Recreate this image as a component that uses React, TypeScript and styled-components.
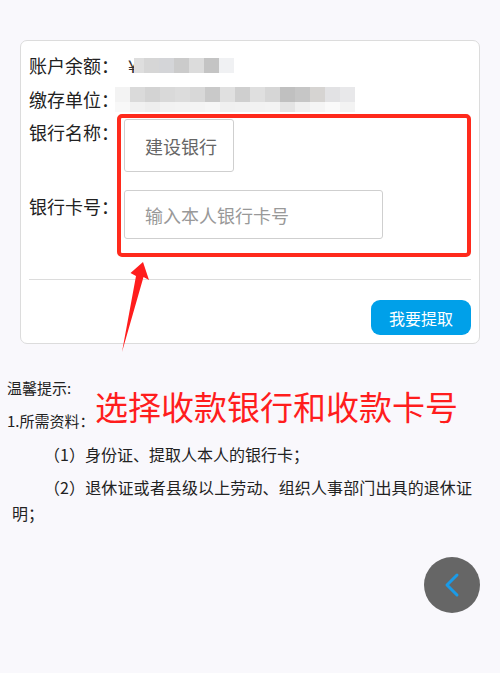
import React from 'react';
import styled, { createGlobalStyle } from 'styled-components';

const GlobalStyle = createGlobalStyle`
  html, body {
    margin: 0;
    padding: 0;
    background: #f9f8fc;
  }
  body {
    font-family: "Noto Sans CJK SC", "Noto Sans", sans-serif;
    color: #222;
  }
`;

const Page = styled.div`
  position: relative;
  width: 500px;
  min-height: 673px;
  padding-top: 40px;
  box-sizing: border-box;
`;

const Card = styled.div`
  margin: 0 20px;
  background: #fff;
  border: 1px solid #dcdcdc;
  border-radius: 7px;
  padding: 7px 8px 8px 8px;
`;

const InfoRow = styled.div`
  display: flex;
  align-items: center;
  height: 34px;
  font-size: 18px;
`;

const FormRow = styled.div<{ $gap?: number }>`
  display: flex;
  align-items: flex-start;
  margin-top: ${(p) => p.$gap ?? 0}px;
`;

const Label = styled.div`
  width: 95px;
  flex: none;
  font-size: 18px;
  line-height: 32px;
  color: #222;
  white-space: nowrap;
`;

const Yen = styled.span`
  font-size: 18px;
  color: #333;
  margin-left: 4px;
`;

const Mosaic = styled.div<{ $cols: string; $rows: string; $shift?: number }>`
  display: grid;
  grid-template-columns: ${(p) => p.$cols};
  grid-template-rows: ${(p) => p.$rows};
  margin-left: ${(p) => p.$shift ?? 0}px;
`;

const Tile = styled.span<{ $c: string }>`
  background: ${(p) => p.$c};
`;

const SelectBox = styled.div`
  margin-top: 3px;
  width: 110px;
  height: 53px;
  box-sizing: border-box;
  border: 1px solid #cfcfcf;
  border-radius: 3px;
  display: flex;
  align-items: center;
  padding-left: 20px;
  font-size: 18px;
  color: #666;
`;

const CardInput = styled.input`
  width: 259px;
  height: 49px;
  box-sizing: border-box;
  border: 1px solid #cfcfcf;
  border-radius: 3px;
  padding: 0 0 0 20px;
  font-family: inherit;
  font-size: 18px;
  color: #333;
  background: #fff;
  outline: none;

  &::placeholder {
    color: #999;
  }
`;

const Divider = styled.hr`
  margin: 40px 0 0;
  border: none;
  border-top: 1px solid #dcdcdc;
`;

const Footer = styled.div`
  display: flex;
  justify-content: flex-end;
  padding-top: 20px;
`;

const SubmitButton = styled.button`
  width: 100px;
  height: 35px;
  border: none;
  border-radius: 9px;
  background: #00a0e9;
  color: #fff;
  font-family: inherit;
  font-size: 16px;
  cursor: pointer;
`;

const Tips = styled.div`
  padding: 31px 28px 0 7px;
  font-size: 15px;
  line-height: 26px;
  color: #222;
`;

const TipLine = styled.p<{ $gap?: number }>`
  margin: 0 0 ${(p) => p.$gap ?? 7}px;
`;

const TipItem = styled.p`
  margin: 0 0 7px 5px;
  font-size: 16px;
  text-indent: 2em;
  text-align: justify;
`;

const Frame = styled.div`
  position: absolute;
  left: 117px;
  top: 114px;
  width: 354px;
  height: 143px;
  box-sizing: border-box;
  border: 4px solid #ff2a1c;
  border-radius: 5px;
  pointer-events: none;
`;

const Note = styled.div`
  position: absolute;
  left: 95px;
  top: 384px;
  font-size: 33px;
  line-height: 44px;
  color: #ff1d1d;
  white-space: nowrap;
`;

const Pointer = styled.svg`
  position: absolute;
  left: 0;
  top: 0;
  pointer-events: none;
`;

const BackButton = styled.button`
  position: absolute;
  left: 424px;
  top: 557px;
  width: 56px;
  height: 56px;
  border-radius: 50%;
  border: none;
  background: #666;
  display: flex;
  align-items: center;
  justify-content: center;
  padding: 0;
  cursor: pointer;
`;

const balanceTiles = ['#dedede', '#d6d6d6', '#d4d5d8', '#cbcbcb', '#dcdcdc', '#c4c4c4', '#f0f1f3'];
const unitTop = [
  '#f3f3f3', '#dadada', '#d3d3d3', '#d9d9d9', '#dcdcdc', '#d8d8d8', '#c9c9c9', '#e0e0e0',
  '#cfcfcf', '#dfdfdf', '#d6d6d6', '#c0c0c0', '#c6c6c6', '#d6d4d2', '#e2e2e4', '#e8e8ea',
];
const unitBottom = [
  '#f8f8f8', '#f1f1f1', '#eeeeee', '#f2f2f2', '#f3f3f3', '#f4f4f4', '#f6f6f6', '#f0f0f0',
  '#f1f1f1', '#f2f2f2', '#f3f3f3', '#e4e4e4', '#f0f0f0', '#f5f5f5', '#fafafa', '#f3f3f3',
];

const App: React.FC = () => {
  return (
    <Page>
      <GlobalStyle />
      <Card>
        <InfoRow>
          <Label>账户余额：</Label>
          <Yen>¥</Yen>
          <Mosaic $cols="10px repeat(6, 15px)" $rows="15px" $shift={-4}>
            {balanceTiles.map((c, i) => (
              <Tile key={i} $c={c} />
            ))}
          </Mosaic>
        </InfoRow>
        <InfoRow>
          <Label>缴存单位：</Label>
          <Mosaic $cols="repeat(16, 15px)" $rows="15px 10px" $shift={-9}>
            {[...unitTop, ...unitBottom].map((c, i) => (
              <Tile key={i} $c={c} />
            ))}
          </Mosaic>
        </InfoRow>
        <FormRow>
          <Label>银行名称：</Label>
          <SelectBox>建设银行</SelectBox>
        </FormRow>
        <FormRow $gap={18}>
          <Label>银行卡号：</Label>
          <CardInput placeholder="输入本人银行卡号" />
        </FormRow>
        <Divider />
        <Footer>
          <SubmitButton>我要提取</SubmitButton>
        </Footer>
      </Card>

      <Tips>
        <TipLine>温馨提示:</TipLine>
        <TipLine>1.所需资料：</TipLine>
        <TipItem>（1）身份证、提取人本人的银行卡；</TipItem>
        <TipItem>（2）退休证或者县级以上劳动、组织人事部门出具的退休证明；</TipItem>
      </Tips>

      <Frame />
      <Note>选择收款银行和收款卡号</Note>
      <Pointer width="500" height="673" viewBox="0 0 500 673">
        <polygon
          points="143,262 149,280 143.5,277 122,352 136,276 130.5,273"
          fill="#ff1d1d"
        />
      </Pointer>

      <BackButton aria-label="返回">
        <svg width="20" height="28" viewBox="0 0 20 28">
          <polyline
            points="15,4 5,14 15,24"
            fill="none"
            stroke="#1a9be8"
            strokeWidth="3"
            strokeLinecap="round"
            strokeLinejoin="round"
          />
        </svg>
      </BackButton>
    </Page>
  );
};

export default App;
